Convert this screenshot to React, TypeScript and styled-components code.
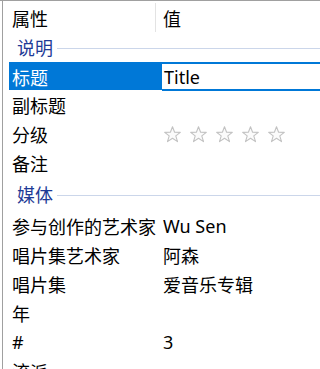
import React, { FC } from 'react';
import styled, { createGlobalStyle } from 'styled-components';

const GlobalStyle = createGlobalStyle`
  html, body {
    margin: 0;
    padding: 0;
    background: #ffffff;
    overflow: hidden;
  }
  body {
    font-family: 'Noto Sans', 'Noto Sans CJK SC', sans-serif;
  }
`;

interface IProp {
  label: string;
  value?: string;
  stars?: number;
  selected?: boolean;
}

interface IGroup {
  title: string;
  height: number;
  props: IProp[];
}

const groups: IGroup[] = [
  {
    title: '说明',
    height: 29,
    props: [
      { label: '标题', value: 'Title', selected: true },
      { label: '副标题' },
      { label: '分级', stars: 5 },
      { label: '备注' },
    ],
  },
  {
    title: '媒体',
    height: 34,
    props: [
      { label: '参与创作的艺术家', value: 'Wu Sen' },
      { label: '唱片集艺术家', value: '阿森' },
      { label: '唱片集', value: '爱音乐专辑' },
      { label: '年' },
      { label: '#', value: '3' },
      { label: '流派' },
    ],
  },
];

const Star: FC = () => (
  <svg width="17" height="17" viewBox="0 0 17 17">
    <path
      d="M8.5 0.8 L10.6 6.3 L16.3 6.4 L11.8 9.9 L13.5 15.6 L8.5 12.3 L3.5 15.6 L5.2 9.9 L0.7 6.4 L6.4 6.3 Z"
      fill="#fbfbfb"
      stroke="#c2c2c2"
      strokeWidth="1.1"
      strokeLinejoin="round"
    />
  </svg>
);

const App: FC = () => (
  <>
    <GlobalStyle />
    <Window>
      <Pane>
        <Header>
          <HeaderCell divider>属性</HeaderCell>
          <HeaderCell>值</HeaderCell>
        </Header>
        {groups.map((group) => (
          <React.Fragment key={group.title}>
            <Group height={group.height}>
              <GroupTitle>{group.title}</GroupTitle>
              <GroupLine />
            </Group>
            {group.props.map((p) => (
              <Row key={p.label} selected={p.selected}>
                <Label selected={p.selected}>{p.label}</Label>
                {p.selected ? (
                  <EditBox>{p.value}</EditBox>
                ) : p.stars ? (
                  <Stars>
                    {Array.from({ length: p.stars }).map((_, i) => (
                      <Star key={i} />
                    ))}
                  </Stars>
                ) : (
                  <Value>{p.value}</Value>
                )}
              </Row>
            ))}
          </React.Fragment>
        ))}
      </Pane>
    </Window>
  </>
);

export default App;

const Window = styled.div`
  width: 320px;
  height: 369px;
  border-top: 1px solid #a0a0a0;
  box-sizing: border-box;
  overflow: hidden;
`;

const Pane = styled.div`
  margin-left: 2px;
  border-left: 1px solid #a0a0a0;
  height: 100%;
  color: #000000;
  font-size: 18px;
`;

const Header = styled.div`
  display: grid;
  grid-template-columns: 147px 1fr;
  height: 32px;
  margin-left: 6px;
`;

const HeaderCell = styled.div<{ divider?: boolean }>`
  display: flex;
  align-items: center;
  margin: 2px 0 1px;
  padding-left: ${({ divider }) => (divider ? '3px' : '7px')};
  border-right: ${({ divider }) => (divider ? '1px solid #e3e3e3' : 'none')};
`;

const Group = styled.div<{ height: number }>`
  display: flex;
  align-items: center;
  gap: 4px;
  height: ${({ height }) => height}px;
  padding-left: 14px;
`;

const GroupTitle = styled.span`
  color: #1e3a96;
  line-height: 1;
`;

const GroupLine = styled.div`
  flex: 1;
  height: 1px;
  background: #cbd6ea;
  margin-top: 1px;
`;

const Row = styled.div<{ selected?: boolean }>`
  display: grid;
  grid-template-columns: 153px 1fr;
  height: 28px;
  margin: 0 0 1px 6px;
  background: ${({ selected }) => (selected ? '#0078d7' : 'transparent')};
`;

const Label = styled.div<{ selected?: boolean }>`
  display: flex;
  align-items: center;
  padding-left: 3px;
  white-space: nowrap;
  color: ${({ selected }) => (selected ? '#ffffff' : '#000000')};
`;

const Value = styled.div`
  display: flex;
  align-items: center;
  padding-left: 1px;
  white-space: nowrap;
`;

const EditBox = styled.div`
  display: flex;
  align-items: center;
  background: #ffffff;
  border-top: 2px solid #0078d7;
  border-bottom: 2px solid #0078d7;
  box-sizing: border-box;
  height: 29px;
  padding-left: 2px;
`;

const Stars = styled.div`
  display: flex;
  align-items: center;
  gap: 9px;
  padding-left: 2px;
`;
